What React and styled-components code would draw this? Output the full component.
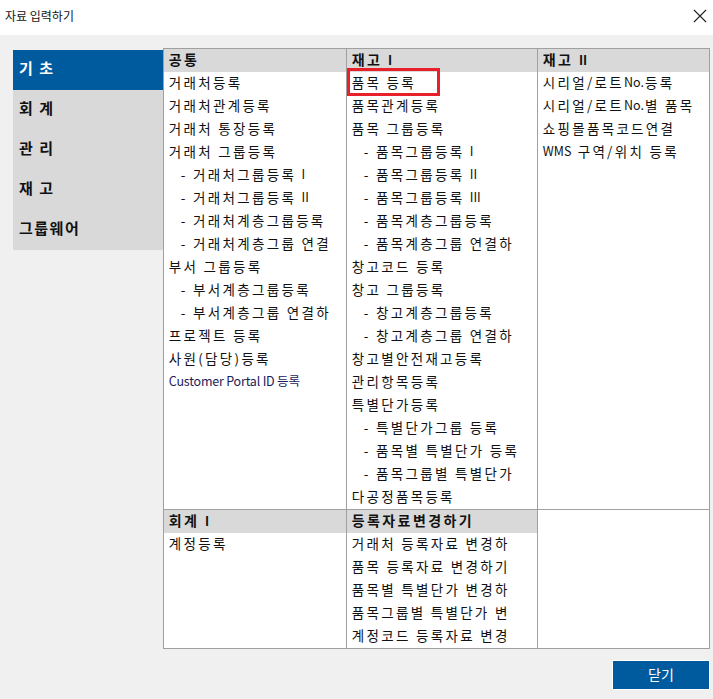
import React from 'react'
import styled, { createGlobalStyle } from 'styled-components'

const GlobalStyle = createGlobalStyle`
  html, body {
    margin: 0;
    padding: 0;
    background: #f0f0f0;
    font-family: "Noto Sans CJK KR", "Noto Sans", sans-serif;
    color: #111;
  }
`

const tabs = ['기 초', '회 계', '관 리', '재 고', '그룹웨어']

const topCols = [
  {
    title: '공통',
    items: [
      { t: '거래처등록' },
      { t: '거래처관계등록' },
      { t: '거래처 통장등록' },
      { t: '거래처 그룹등록' },
      { t: '- 거래처그룹등록 I', sub: true },
      { t: '- 거래처그룹등록 II', sub: true },
      { t: '- 거래처계층그룹등록', sub: true },
      { t: '- 거래처계층그룹 연결', sub: true },
      { t: '부서 그룹등록' },
      { t: '- 부서계층그룹등록', sub: true },
      { t: '- 부서계층그룹 연결하', sub: true },
      { t: '프로젝트 등록' },
      { t: '사원(담당)등록' },
      { t: 'Customer Portal ID 등록', latin: true }
    ]
  },
  {
    title: '재고 I',
    items: [
      { t: '품목 등록', marked: true },
      { t: '품목관계등록' },
      { t: '품목 그룹등록' },
      { t: '- 품목그룹등록 I', sub: true },
      { t: '- 품목그룹등록 II', sub: true },
      { t: '- 품목그룹등록 III', sub: true },
      { t: '- 품목계층그룹등록', sub: true },
      { t: '- 품목계층그룹 연결하', sub: true },
      { t: '창고코드 등록' },
      { t: '창고 그룹등록' },
      { t: '- 창고계층그룹등록', sub: true },
      { t: '- 창고계층그룹 연결하', sub: true },
      { t: '창고별안전재고등록' },
      { t: '관리항목등록' },
      { t: '특별단가등록' },
      { t: '- 특별단가그룹 등록', sub: true },
      { t: '- 품목별 특별단가 등록', sub: true },
      { t: '- 품목그룹별 특별단가', sub: true },
      { t: '다공정품목등록' }
    ]
  },
  {
    title: '재고 II',
    items: [
      { t: '시리얼/로트No.등록' },
      { t: '시리얼/로트No.별 품목' },
      { t: '쇼핑몰품목코드연결' },
      { t: 'WMS 구역/위치 등록' }
    ]
  }
]

const bottomCols = [
  {
    title: '회계 I',
    items: [{ t: '계정등록' }]
  },
  {
    title: '등록자료변경하기',
    items: [
      { t: '거래처 등록자료 변경하' },
      { t: '품목 등록자료 변경하기' },
      { t: '품목별 특별단가 변경하' },
      { t: '품목그룹별 특별단가 변' },
      { t: '계정코드 등록자료 변경' }
    ]
  },
  { title: null, items: [] }
]

// latin runs (No., WMS, I, II) stay tight, hangul gets the wide pitch
const renderText = (text) =>
  text.split(/([A-Za-z.]+)/).map((part, i) =>
    /[A-Za-z]/.test(part) ? <Latin key={i}>{part}</Latin> : part
  )

const Column = ({ col }) => (
  <Cell>
    {col.title && <CellHeader>{renderText(col.title)}</CellHeader>}
    {col.items.map((it, i) => (
      <Item key={i} $sub={it.sub} $latin={it.latin}>
        {it.latin ? it.t : renderText(it.t)}
        {it.marked && <Marker />}
      </Item>
    ))}
  </Cell>
)

const App = () => {
  return (
    <>
      <GlobalStyle />
      <Window>
        <TitleBar>
          <Title>자료 입력하기</Title>
          <CloseIcon width="14" height="14" viewBox="0 0 14 14">
            <path d="M1 1 L13 13 M13 1 L1 13" stroke="#222" strokeWidth="1.1" fill="none" />
          </CloseIcon>
        </TitleBar>

        <Body>
          <Main>
            <Sidebar>
              {tabs.map((t, i) => (
                <Tab key={t} $active={i === 0}>{t}</Tab>
              ))}
            </Sidebar>

            <Panel>
              <Section $h={461}>
                {topCols.map((c, i) => <Column key={i} col={c} />)}
              </Section>
              <Section $h={139}>
                {bottomCols.map((c, i) => <Column key={i} col={c} />)}
              </Section>
            </Panel>
          </Main>

          <Footer>
            <CloseButton>닫기</CloseButton>
          </Footer>
        </Body>
      </Window>
    </>
  )
}

export default App

const Window = styled.div`
  width: 713px;
  height: 699px;
  display: flex;
  flex-direction: column;
  background: #f0f0f0;
`

const TitleBar = styled.div`
  height: 35px;
  background: #ffffff;
  display: flex;
  align-items: center;
  justify-content: space-between;
  padding: 0 6px 0 5px;
  box-sizing: border-box;
`

const Title = styled.div`
  font-size: 12px;
  color: #111;
  margin-top: -5px;
`

const CloseIcon = styled.svg`
  display: block;
  margin-top: -3px;
`

const Body = styled.div`
  padding: 13px 3px 0 13px;
  display: flex;
  flex-direction: column;
`

const Main = styled.div`
  display: flex;
  align-items: flex-start;
`

const Sidebar = styled.div`
  width: 150px;
  margin-top: 2px;
  background: #d9d9d9;
  display: flex;
  flex-direction: column;
`

const Tab = styled.div`
  height: 40px;
  box-sizing: border-box;
  display: flex;
  align-items: center;
  padding: 0 0 5px 6px;
  font-size: 15px;
  font-weight: 700;
  letter-spacing: 1.5px;
  color: ${p => (p.$active ? '#ffffff' : '#111')};
  background: ${p => (p.$active ? '#005a9e' : 'transparent')};
`

const Panel = styled.div`
  width: 547px;
  border-left: 1px solid #a0a0a0;
  border-top: 1px solid #a0a0a0;
  background: #ffffff;
`

const Section = styled.div`
  display: grid;
  grid-template-columns: 183px 191px 1fr;
  height: ${p => p.$h}px;
`

const Cell = styled.div`
  border-right: 1px solid #a0a0a0;
  border-bottom: 1px solid #a0a0a0;
  overflow: hidden;
  min-width: 0;
`

const CellHeader = styled.div`
  height: 23px;
  box-sizing: border-box;
  background: #d9d9d9;
  display: flex;
  align-items: center;
  padding: 0 0 3px 5px;
  font-size: 14px;
  font-weight: 700;
  letter-spacing: 2.4px;
  color: #111;
  white-space: pre;
`

const Item = styled.div`
  position: relative;
  height: 23px;
  box-sizing: border-box;
  display: flex;
  align-items: center;
  padding: 0 0 4px ${p => (p.$sub ? '17px' : '5px')};
  font-size: ${p => (p.$latin ? '12.5px' : '13.5px')};
  letter-spacing: ${p => (p.$latin ? '-0.2px' : '2.3px')};
  color: ${p => (p.$latin ? '#1c1c5a' : '#111')};
  white-space: pre;
`

const Latin = styled.span`
  letter-spacing: 0;
  font-size: 12.5px;
  margin-right: 1px;
`

const Marker = styled.span`
  position: absolute;
  left: 0;
  top: -4px;
  width: 93px;
  height: 28px;
  border: 3px solid #e8202a;
  box-sizing: border-box;
  pointer-events: none;
  z-index: 1;
`

const Footer = styled.div`
  display: flex;
  justify-content: flex-end;
  padding-top: 11px;
`

const CloseButton = styled.button`
  width: 98px;
  height: 30px;
  padding: 0 0 3px;
  background: #005a9e;
  color: #ffffff;
  border: 1px solid #ffffff;
  outline: none;
  font-family: "Noto Sans CJK KR", "Noto Sans", sans-serif;
  font-size: 14px;
  cursor: pointer;
`
